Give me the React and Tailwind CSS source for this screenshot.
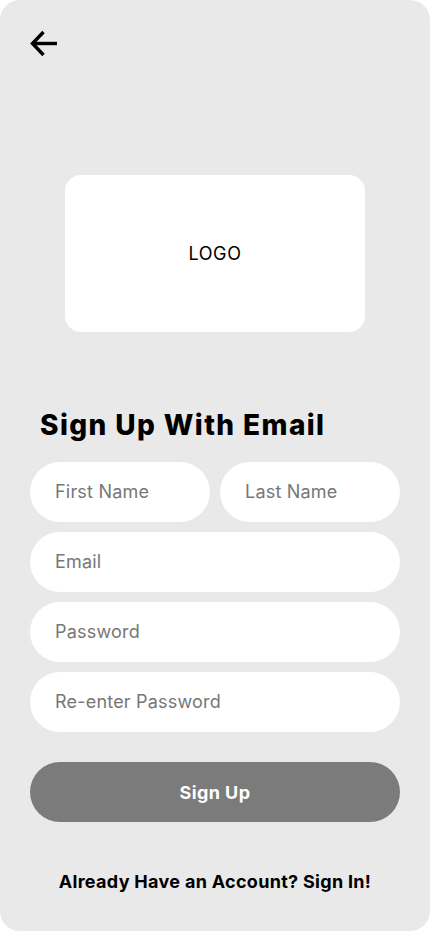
import React from "react";

function Field({ placeholder, className = "" }) {
  return (
    <div className={`h-[60px] rounded-full bg-white flex items-center pl-[25px] ${className}`}>
      <span className="text-[18px] text-[#777777] leading-none tracking-[0.2px]">{placeholder}</span>
    </div>
  );
}

export default function App() {
  return (
    <div className="w-[430px] h-[932px] bg-white" style={{ fontFamily: "Inter, 'Open Sans', sans-serif" }}>
      <div className="w-[430px] h-[931px] rounded-[20px] bg-[#e9e9e9] flex flex-col px-[30px]">
        <div className="pt-[30px] h-[57px]">
          <svg width="28" height="27" viewBox="0 0 28 27" fill="none" className="block">
            <path d="M27 13.5H3" stroke="black" strokeWidth="3.4" />
            <path d="M13.5 2L2.5 13.5L13.5 25" stroke="black" strokeWidth="3.4" strokeLinejoin="miter" />
          </svg>
        </div>
        <div className="mt-[118px] mx-auto w-[300px] h-[157px] rounded-[16px] bg-white flex items-center justify-center">
          <span className="text-[18px] text-black tracking-[0.6px]">LOGO</span>
        </div>
        <h1 className="mt-[76px] ml-[10px] text-[28px] leading-[34px] font-extrabold tracking-[1.4px] text-black">Sign Up With Email</h1>
        <div className="mt-[20px] flex flex-col gap-[10px]">
          <div className="grid grid-cols-2 gap-[10px]">
            <Field placeholder="First Name" />
            <Field placeholder="Last Name" />
          </div>
          <Field placeholder="Email" />
          <Field placeholder="Password" />
          <Field placeholder="Re-enter Password" />
        </div>
        <button className="mt-[30px] h-[60px] rounded-full bg-[#7b7b7b] text-white text-[18px] font-bold tracking-[0.4px]">
          Sign Up
        </button>
        <p className="mt-[48px] text-center text-[18px] font-bold text-black leading-[24px] tracking-[0.3px]">
          Already Have an Account? Sign In!
        </p>
      </div>
    </div>
  );
}
